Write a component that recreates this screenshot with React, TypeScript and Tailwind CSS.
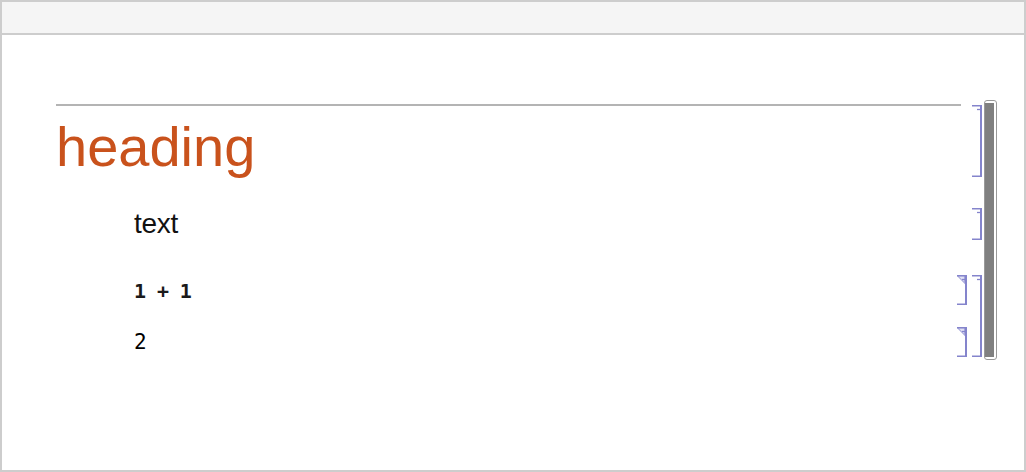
import React from "react";

const BR = "#8484cc";

function Bracket({ h, input = false }: { h: number; input?: boolean }) {
  return (
    <svg width={10} height={h} viewBox={`0 0 10 ${h}`} className="block shrink-0">
      {input && (
        <path d="M0.5 0.8 L7.5 0.8 L7.5 7.8 Z" fill="#e2e2f4" stroke="#a8a8dc" strokeWidth={1.1} strokeLinejoin="miter" />
      )}
      <line x1={0} y1={0.75} x2={10} y2={0.75} stroke={BR} strokeWidth={1.5} />
      <line x1={5} y1={4.5} x2={9} y2={4.5} stroke={BR} strokeWidth={1.3} />
      <rect x={8} y={0} width={2} height={h} fill={BR} />
      <line x1={0} y1={h - 0.75} x2={10} y2={h - 0.75} stroke={BR} strokeWidth={1.5} />
    </svg>
  );
}

export default function App() {
  return (
    <div className="w-[1026px] h-[472px] border-2 border-[#cdcdcd] bg-white flex flex-col overflow-hidden">
      <div className="h-[33px] shrink-0 bg-[#f5f5f5] border-b-2 border-[#cdcdcd]" />
      <div className="flex pl-[54px] pt-[65px]">
        <div className="flex flex-col w-[926px] pt-[4px] pb-[3px]">
          {/* heading cell */}
          <div className="flex h-[73px]">
            <div className="flex-1 flex flex-col">
              <div className="w-[905px] h-[2px] bg-[#b4b4b4]" />
              <div
                className="mt-[13px] text-[56px] leading-none text-[#c9521c]"
                style={{ fontFamily: '"Liberation Sans", Arial, sans-serif' }}
              >
                heading
              </div>
            </div>
            <div className="pt-[1px]">
              <Bracket h={72} />
            </div>
          </div>
          {/* text cell */}
          <div className="flex h-[32px] mt-[31px]">
            <div className="flex-1 pl-[78px]">
              <div
                className="mt-[2px] text-[28px] leading-none text-[#111] tracking-[-0.3px]"
                style={{ fontFamily: '"Liberation Sans", Arial, sans-serif' }}
              >
                text
              </div>
            </div>
            <Bracket h={32} />
          </div>
          {/* input/output group */}
          <div className="flex mt-[35px] gap-[5px]">
            <div className="flex-1 flex flex-col">
              <div className="flex h-[30px]">
                <div className="flex-1 pl-[78px]">
                  <div
                    className="mt-[6px] text-[20px] leading-none font-bold tracking-[-0.6px] whitespace-pre text-[#1a1a1a]"
                    style={{ fontFamily: '"DejaVu Sans Mono", monospace' }}
                  >
                    1 + 1
                  </div>
                </div>
                <Bracket h={30} input />
              </div>
              <div className="flex h-[30px] mt-[22px]">
                <div className="flex-1 pl-[78px]">
                  <div
                    className="mt-[5px] text-[21px] leading-none whitespace-pre text-black"
                    style={{ fontFamily: '"DejaVu Sans Mono", monospace' }}
                  >
                    2
                  </div>
                </div>
                <Bracket h={30} input />
              </div>
            </div>
            <Bracket h={82} />
          </div>
        </div>
        <div className="ml-[2px] w-[13px] border border-[#9a9a9a] rounded-[3px] py-[2px] pr-[2px] bg-white flex">
          <div className="flex-1 bg-[#808080]" />
        </div>
      </div>
    </div>
  );
}
